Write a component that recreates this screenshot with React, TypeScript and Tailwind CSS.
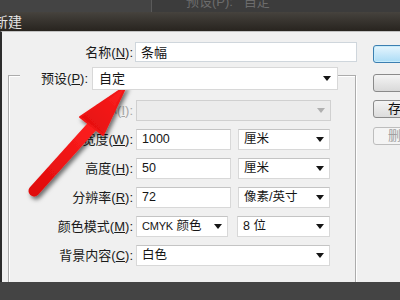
import React from "react";

function Tri({ gray }: { gray?: boolean }) {
  return (
    <svg width="8" height="5" viewBox="0 0 8 5" className="shrink-0">
      <path d="M0 0H8L4 5Z" fill={gray ? "#b0b0b0" : "#151515"} />
    </svg>
  );
}

function Input({ w, children }: { w: string; children?: React.ReactNode }) {
  return (
    <div
      className={`${w} h-[21px] bg-white border border-[#d8d8d8] border-t-[#c4c4c4] flex items-center pl-[5px] text-[12.5px] leading-[15px] text-[#151515]`}
    >
      {children}
    </div>
  );
}

function Select({ w, children, disabled }: { w: string; children?: React.ReactNode; disabled?: boolean }) {
  return (
    <div
      className={`${w} h-[21px] border flex items-center justify-between pl-[5px] pr-[5px] text-[12.5px] leading-[15px] text-[#151515] ${
        disabled ? "bg-[#ececec] border-[#d0d0d0]" : "bg-white border-[#d8d8d8] border-t-[#c4c4c4]"
      }`}
    >
      <span className="whitespace-nowrap">{children}</span>
      <Tri gray={disabled} />
    </div>
  );
}

function Label({ children, disabled }: { children: React.ReactNode; disabled?: boolean }) {
  return (
    <div
      className={`w-[124px] shrink-0 text-right text-[13px] leading-[15px] whitespace-nowrap ${
        disabled ? "text-[#a6a6a6]" : "text-[#1a1a1a]"
      }`}
    >
      {children}
    </div>
  );
}

export default function App() {
  return (
    <div className="relative w-[400px] h-[300px] overflow-hidden bg-[#454545] flex flex-col font-['Liberation_Sans','Noto_Sans_CJK_SC',sans-serif]">
      {/* top strip */}
      <div className="h-[12px] shrink-0 flex bg-[#3c3c3c] overflow-hidden">
        <div className="w-[152px] h-full bg-[#444] border-r border-[#5a5a5a]" />
        <div className="pl-[34px] -mt-[6px] text-[13px] leading-[15px] text-[#6c6c6c] whitespace-nowrap">
          预设(P):&nbsp;&nbsp;&nbsp;自定
        </div>
      </div>
      {/* title bar */}
      <div className="h-[19px] shrink-0 bg-gradient-to-b from-[#46433e] to-[#28241f] flex items-center overflow-hidden">
        <span className="-ml-[6px] text-[14px] leading-[16px] text-[#e4e4e4]">新建</span>
      </div>
      {/* dialog body */}
      <div className="h-[251px] shrink-0 flex overflow-hidden bg-[#f0f0f0] border-l-2 border-l-[#2c2c2c] border-t border-t-[#c2c2c2]">
        <div className="w-[355px] shrink-0 flex flex-col pt-[10px]">
          {/* name row */}
          <div className="flex items-center">
            <div className="w-[131px] text-right text-[13px] leading-[15px] text-[#1a1a1a]">
              名称(<u>N</u>):
            </div>
            <div className="ml-[2px] w-[222px] h-[20px] bg-white border border-[#cfd6dc] flex items-center pl-[5px] text-[13px] leading-[15px] text-[#151515]">
              条幅
            </div>
          </div>
          {/* preset row */}
          <div className="relative z-10 mt-[5px] pl-[18px] flex items-center">
            <div className="w-[72px] h-[23px] bg-[#f0f0f0] flex items-center justify-end pr-[4px] text-[13px] leading-[15px] text-[#1a1a1a]">
              预设(<u>P</u>):
            </div>
            <div className="w-[246px] h-[23px] bg-white border border-[#d8d8d8] flex items-center justify-between pl-[6px] pr-[6px] text-[13px] leading-[15px] text-[#151515]">
              <span>自定</span>
              <Tri />
            </div>
          </div>
          {/* group box */}
          <div className="-mt-[15px] ml-[6px] w-[348px] h-[220px] shrink-0 border border-[#acacac] shadow-[inset_1px_1px_0_#ffffff,1px_1px_0_#ffffff] pt-[24px] flex flex-col gap-[8px]">
            <div className="flex items-center h-[21px]">
              <Label disabled>
                大小(<u>I</u>):
              </Label>
              <div className="ml-[3px]">
                <Select w="w-[195px]" disabled />
              </div>
            </div>
            <div className="flex items-center h-[21px]">
              <Label>
                宽度(<u>W</u>):
              </Label>
              <div className="ml-[3px] flex items-center gap-[7px]">
                <Input w="w-[95px]">1000</Input>
                <Select w="w-[92px]">厘米</Select>
              </div>
            </div>
            <div className="flex items-center h-[21px]">
              <Label>
                高度(<u>H</u>):
              </Label>
              <div className="ml-[3px] flex items-center gap-[7px]">
                <Input w="w-[95px]">50</Input>
                <Select w="w-[92px]">厘米</Select>
              </div>
            </div>
            <div className="flex items-center h-[21px]">
              <Label>
                分辨率(<u>R</u>):
              </Label>
              <div className="ml-[3px] flex items-center gap-[7px]">
                <Input w="w-[95px]">72</Input>
                <Select w="w-[92px]">像素/英寸</Select>
              </div>
            </div>
            <div className="flex items-center h-[21px]">
              <Label>
                颜色模式(<u>M</u>):
              </Label>
              <div className="ml-[3px] flex items-center gap-[9px]">
                <Select w="w-[92px]">
                  <span className="text-[11px] tracking-[-0.2px]">CMYK</span> 颜色
                </Select>
                <Select w="w-[93px]">8 位</Select>
              </div>
            </div>
            <div className="flex items-center h-[21px]">
              <Label>
                背景内容(<u>C</u>):
              </Label>
              <div className="ml-[3px]">
                <Select w="w-[194px]">白色</Select>
              </div>
            </div>
          </div>
        </div>
        {/* right buttons */}
        <div className="ml-[16px] pt-[13px] flex flex-col">
          <div className="w-[40px] h-[18px] rounded-[3px] border border-[#3c7fb1] bg-gradient-to-b from-[#e6f5fd] to-[#abdcf6] shadow-[inset_0_0_0_1px_#c8ecfb] text-[13px] leading-[16px] pl-[30px] whitespace-nowrap overflow-hidden">
            确定
          </div>
          <div className="mt-[11px] w-[40px] h-[18px] rounded-[3px] border border-[#8a8a8a] bg-gradient-to-b from-[#f4f4f4] to-[#d9d9d9] text-[13px] leading-[16px] pl-[30px] whitespace-nowrap overflow-hidden">
            取消
          </div>
          <div className="mt-[8px] w-[40px] h-[18px] rounded-[3px] border border-[#8a8a8a] bg-gradient-to-b from-[#f4f4f4] to-[#dcdcdc] text-[13px] leading-[16px] pl-[14px] text-[#111] whitespace-nowrap overflow-hidden">
            存储预设(S)...
          </div>
          <div className="mt-[9px] w-[40px] h-[18px] rounded-[3px] border border-[#bdbdbd] bg-[#f4f4f4] text-[13px] leading-[16px] pl-[14px] text-[#a0a0a0] whitespace-nowrap overflow-hidden">
            删除预设(D)...
          </div>
        </div>
      </div>
      {/* bottom strip */}
      <div className="flex-1 bg-[#444]" />

      {/* red arrow overlay */}
      <svg className="absolute left-0 top-0 pointer-events-none" width="400" height="300" viewBox="0 0 400 300">
        <defs>
          <linearGradient id="ag" x1="0" y1="1" x2="1" y2="0">
            <stop offset="0" stopColor="#e00c0c" />
            <stop offset="1" stopColor="#ff2020" />
          </linearGradient>
          <filter id="sh" x="-20%" y="-20%" width="140%" height="140%">
            <feDropShadow dx="2" dy="3" stdDeviation="2" floodColor="#000" floodOpacity="0.55" />
          </filter>
        </defs>
        <g filter="url(#sh)">
          <line x1="34" y1="191" x2="97" y2="121" stroke="url(#ag)" strokeWidth="11" strokeLinecap="round" />
          <path d="M126 86 L80 117 L103 135 Z" fill="url(#ag)" stroke="#f01515" strokeWidth="2" strokeLinejoin="round" />
        </g>
      </svg>
    </div>
  );
}
